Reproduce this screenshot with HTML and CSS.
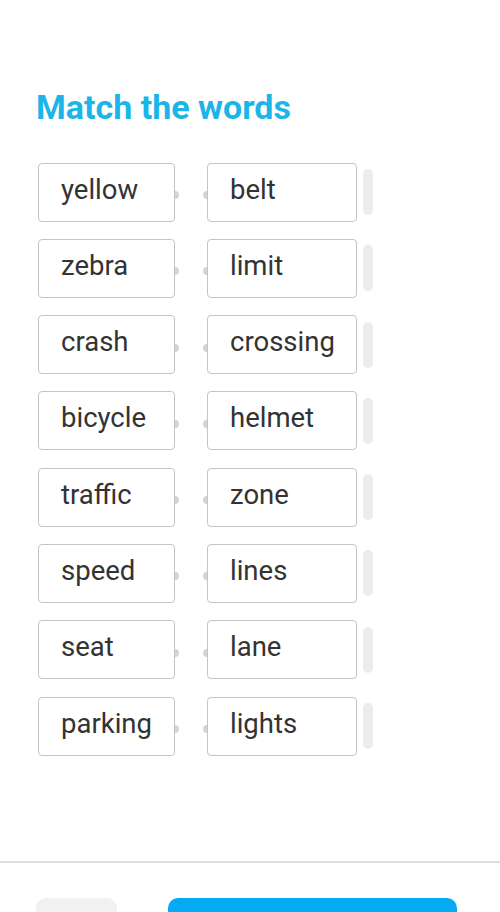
FILE: index.html
```html
<!DOCTYPE html>
<html lang="en">
<head>
  <meta charset="UTF-8" />
  <title>Match the words</title>
  <link rel="stylesheet" href="styles.css">
</head>
<body>
  <main class="task">
    <h1>Match the words</h1>

    <div class="pairs">
      <div class="pair"><div class="word left">yellow</div><div class="word right">belt</div><div class="handle"></div></div>
      <div class="pair"><div class="word left">zebra</div><div class="word right">limit</div><div class="handle"></div></div>
      <div class="pair"><div class="word left">crash</div><div class="word right">crossing</div><div class="handle"></div></div>
      <div class="pair"><div class="word left">bicycle</div><div class="word right">helmet</div><div class="handle"></div></div>
      <div class="pair"><div class="word left">traffic</div><div class="word right">zone</div><div class="handle"></div></div>
      <div class="pair"><div class="word left">speed</div><div class="word right">lines</div><div class="handle"></div></div>
      <div class="pair"><div class="word left">seat</div><div class="word right">lane</div><div class="handle"></div></div>
      <div class="pair"><div class="word left">parking</div><div class="word right">lights</div><div class="handle"></div></div>
    </div>
  </main>

  <footer class="bottom">
    <button class="btn-skip"></button>
    <button class="btn-check"></button>
  </footer>
</body>
</html>
```

FILE: styles.css
```css
body {
  margin: 0;
  font-family: Roboto, "Noto Sans", sans-serif;
  background: #fff;
  color: #333;
  width: 500px;
  height: 912px;
  overflow: hidden;
}
.task {
  padding: 91px 0 0 38px;
  height: 771px;
  box-sizing: border-box;
}
h1 {
  margin: 0 0 39px -2px;
  font-size: 34px;
  line-height: 32px;
  font-weight: 700;
  color: #1cb5ea;
}
.pairs {
  display: flex;
  flex-direction: column;
  gap: 16.3px;
}
.pair {
  display: flex;
  align-items: center;
  height: 60px;
}
.word {
  position: relative;
  box-sizing: border-box;
  height: 59px;
  border: 1px solid #c4c4c4;
  border-radius: 4px;
  padding: 0 0 6px 22px;
  display: flex;
  align-items: center;
  font-size: 27.5px;
  color: #333;
}
.word.left {
  width: 137px;
  margin-right: 32px;
}
.word.right {
  width: 150px;
  margin-right: 6px;
}
.word.left::after,
.word.right::before {
  content: "";
  position: absolute;
  top: 50%;
  width: 4px;
  height: 8px;
  margin-top: -1px;
  background: #d4d4d4;
}
.word.left::after {
  right: -5px;
  border-radius: 0 4px 4px 0;
}
.word.right::before {
  left: -5px;
  border-radius: 4px 0 0 4px;
}
.handle {
  width: 10px;
  height: 46px;
  border-radius: 5px;
  background: #ececec;
}
.bottom {
  border-top: 2px solid #dedede;
  margin-top: 90px;
  display: flex;
  gap: 51px;
  padding: 35px 0 0 36px;
}
.bottom button {
  border: none;
  height: 50px;
  border-radius: 10px;
}
.btn-skip {
  width: 81px;
  background: #f1f1f1;
}
.btn-check {
  width: 289px;
  background: #04aaf2;
}
```
